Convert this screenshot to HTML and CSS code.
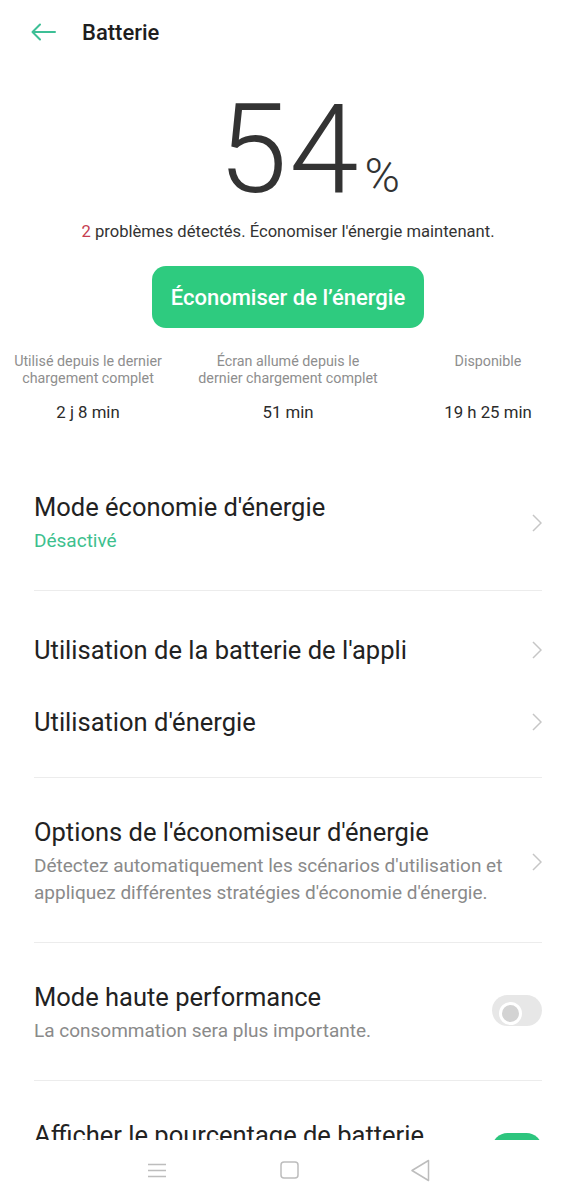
FILE: index.html
```html
<!DOCTYPE html>
<html lang="fr">
<head>
<meta charset="utf-8">
<title>Batterie</title>
<link rel="stylesheet" href="styles.css">
</head>
<body>
<div class="screen">
  <header class="topbar">
    <svg class="back" viewBox="0 0 26 20" aria-hidden="true">
      <path d="M25 10H3M10 2.5L2.5 10L10 17.5" fill="none" stroke="#3dbf96" stroke-width="2" stroke-linecap="round" stroke-linejoin="round"/>
    </svg>
    <h1 class="title">Batterie</h1>
  </header>

  <section class="hero">
    <div class="big">54<span class="pct">%</span></div>
    <p class="alert"><span class="count">2</span> problèmes détectés. Économiser l'énergie maintenant.</p>
    <button class="cta">Économiser de l’énergie</button>
    <div class="stats">
      <div class="stat-label">Utilisé depuis le dernier<br>chargement complet</div>
      <div class="stat-label">Écran allumé depuis le<br>dernier chargement complet</div>
      <div class="stat-label">Disponible</div>
      <div class="stat-value">2 j 8 min</div>
      <div class="stat-value">51 min</div>
      <div class="stat-value">19 h 25 min</div>
    </div>
  </section>

  <div class="list">
    <div class="group">
      <div class="row">
        <div class="row-text">
          <div class="row-title">Mode économie d'énergie</div>
          <div class="row-sub accent">Désactivé</div>
        </div>
        <svg class="chev" viewBox="0 0 10 18" aria-hidden="true"><path d="M1 1L9 9L1 17" fill="none" stroke="#c6c6c6" stroke-width="1.5"/></svg>
      </div>
    </div>
    <div class="group">
      <div class="row">
        <div class="row-text"><div class="row-title">Utilisation de la batterie de l'appli</div></div>
        <svg class="chev" viewBox="0 0 10 18" aria-hidden="true"><path d="M1 1L9 9L1 17" fill="none" stroke="#c6c6c6" stroke-width="1.5"/></svg>
      </div>
      <div class="row">
        <div class="row-text"><div class="row-title">Utilisation d'énergie</div></div>
        <svg class="chev" viewBox="0 0 10 18" aria-hidden="true"><path d="M1 1L9 9L1 17" fill="none" stroke="#c6c6c6" stroke-width="1.5"/></svg>
      </div>
    </div>
    <div class="group">
      <div class="row">
        <div class="row-text">
          <div class="row-title">Options de l'économiseur d'énergie</div>
          <div class="row-sub">Détectez automatiquement les scénarios d'utilisation et appliquez différentes stratégies d'économie d'énergie.</div>
        </div>
        <svg class="chev" viewBox="0 0 10 18" aria-hidden="true"><path d="M1 1L9 9L1 17" fill="none" stroke="#c6c6c6" stroke-width="1.5"/></svg>
      </div>
    </div>
    <div class="group">
      <div class="row">
        <div class="row-text">
          <div class="row-title">Mode haute performance</div>
          <div class="row-sub">La consommation sera plus importante.</div>
        </div>
        <span class="switch"></span>
      </div>
    </div>
    <div class="group last">
      <div class="row row-top">
        <div class="row-text"><div class="row-title">Afficher le pourcentage de batterie</div></div>
        <span class="switch on"></span>
      </div>
    </div>
  </div>
</div>

<nav class="navbar">
  <span class="nav-slot nav-menu">
    <svg width="18" height="15" viewBox="0 0 18 15" aria-hidden="true"><path d="M0 1.5H18M0 7.5H18M0 13.5H18" stroke="#bdbdbd" stroke-width="1.5"/></svg>
  </span>
  <span class="nav-slot">
    <svg width="19" height="18" viewBox="0 0 19 18" aria-hidden="true"><rect x="1" y="1" width="17" height="16" rx="3" fill="none" stroke="#bdbdbd" stroke-width="1.5"/></svg>
  </span>
  <span class="nav-slot nav-back">
    <svg width="20" height="23" viewBox="0 0 20 23" aria-hidden="true"><path d="M18.5 1.5L2 11.5L18.5 21.5Z" fill="none" stroke="#bdbdbd" stroke-width="1.5" stroke-linejoin="round"/></svg>
  </span>
</nav>
</body>
</html>
```

FILE: styles.css
```css
* { box-sizing: border-box; }

html, body {
  margin: 0;
  padding: 0;
  background: #ffffff;
}

body {
  font-family: Roboto, "Noto Sans", "Liberation Sans", sans-serif;
  color: #222222;
  width: 576px;
  height: 1200px;
  overflow: hidden;
}

.screen {
  height: 1140px;
  overflow: hidden;
}

/* Top bar */
.topbar {
  height: 64px;
  display: flex;
  align-items: center;
  padding-left: 30px;
}

.back {
  width: 26px;
  height: 20px;
  flex: none;
}

.title {
  margin: 0 0 0 26px;
  font-size: 22px;
  font-weight: 500;
  color: #1e1e1e;
}

/* Hero */
.hero {
  text-align: center;
}

.big {
  margin-top: 23px;
  height: 125px;
  font-size: 125px;
  line-height: 125px;
  font-weight: 300;
  color: #333333;
  letter-spacing: 2px;
}

.pct {
  font-size: 48px;
  line-height: 1;
  letter-spacing: 0;
  margin-left: 4px;
  margin-right: -42px;
}

.alert {
  margin: 10px 0 0;
  font-size: 16.6px;
  line-height: 20px;
  color: #333333;
}

.alert .count {
  color: #c63d50;
}

.cta {
  display: block;
  margin: 24px auto 0;
  width: 272px;
  height: 62px;
  border: 0;
  border-radius: 14px;
  background: #2ecb7f;
  color: #ffffff;
  font-family: Roboto, "Noto Sans", sans-serif;
  font-size: 22px;
  font-weight: 500;
}

.stats {
  display: grid;
  grid-template-columns: 176px 224px 176px;
  row-gap: 15px;
  margin-top: 25px;
}

.stat-label {
  font-size: 14.3px;
  line-height: 17px;
  color: #8e8e8e;
  white-space: nowrap;
}

.stat-value {
  font-size: 16.8px;
  line-height: 20px;
  color: #2b2b2b;
}

/* List */
.list {
  margin-top: 31px;
  padding: 0 34px;
}

.group {
  padding: 22px 0 20px;
  border-bottom: 1px solid #ececec;
}

.group.last {
  border-bottom: 0;
}

.row {
  display: flex;
  align-items: center;
  gap: 12px;
  min-height: 72px;
  padding: 17px 0 16px;
}

.row-text {
  flex: 1;
  min-width: 0;
}

.row-title {
  font-size: 25.5px;
  line-height: 30px;
  color: #222222;
}

.row-sub {
  margin-top: 5px;
  font-size: 19px;
  line-height: 27px;
  color: #8a8a8a;
}

.row-sub.accent {
  color: #3dbf8e;
}

.chev {
  width: 10px;
  height: 18px;
  flex: none;
}

.switch {
  flex: none;
  position: relative;
  width: 50px;
  height: 31px;
  border-radius: 16px;
  background: #e7e7e7;
  margin-bottom: 6px;
}

.switch::after {
  content: "";
  position: absolute;
  left: 7px;
  top: 7px;
  width: 17px;
  height: 17px;
  border-radius: 50%;
  border: 3px solid #ffffff;
  background: #d3d3d3;
}

.switch.on {
  background: #2dc57e;
  margin-bottom: 0;
}

.switch.on::after {
  display: none;
}

.row-top {
  align-items: flex-start;
}

.row-top .switch {
  margin-top: 13px;
}

/* Navigation bar */
.navbar {
  height: 60px;
  display: flex;
  justify-content: center;
  align-items: center;
  background: #ffffff;
}

.nav-slot {
  width: 40px;
  display: flex;
  justify-content: center;
  align-items: center;
}

.nav-menu {
  margin-right: 93px;
}

.nav-back {
  margin-left: 90px;
}
```
